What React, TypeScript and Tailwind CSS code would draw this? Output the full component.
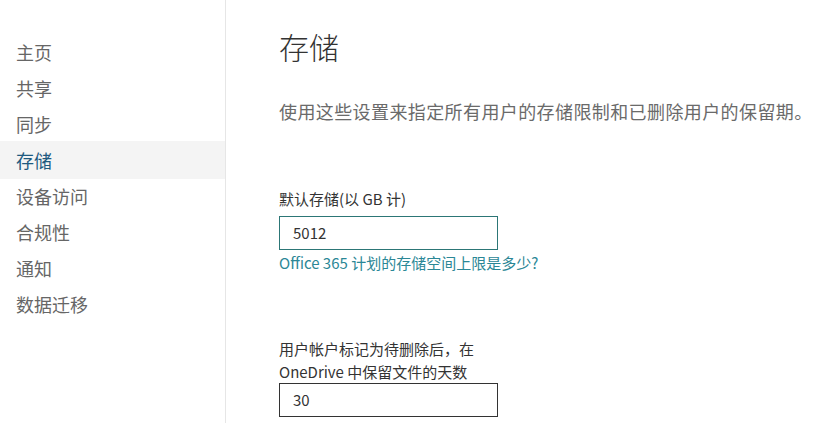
import React from 'react';

const font = { fontFamily: '"Noto Sans CJK SC", "Noto Sans", sans-serif' };

const navItems = ['主页', '共享', '同步', '存储', '设备访问', '合规性', '通知', '数据迁移'];

const Sidebar: React.FC = () => {
  return (
    <aside className="w-[226px] shrink-0 border-r border-[#e6e6e6] pt-[34px]">
      <ul>
        {navItems.map((item) => {
          const active = item === '存储';
          return (
            <li
              key={item}
              className={
                active
                  ? 'h-[38px] -my-[1px] flex items-center pl-[16px] text-[18px] text-[#1e5a80] bg-[#f4f4f4]'
                  : 'h-[36px] flex items-center pl-[16px] text-[18px] text-[#666666]'
              }
            >
              {item}
            </li>
          );
        })}
      </ul>
    </aside>
  );
};

const App: React.FC = () => {
  return (
    <div className="flex w-[836px] h-[423px] bg-white overflow-hidden" style={font}>
      <Sidebar />
      <main className="flex-1 pl-[53px] pt-[24px]">
        <h1 className="text-[30px] font-light text-[#333333] leading-[44px]">存储</h1>
        <p className="mt-[31px] text-[18px] tracking-[0.4px] text-[#6a6a6a] leading-[24px] whitespace-nowrap">
          使用这些设置来指定所有用户的存储限制和已删除用户的保留期。
        </p>

        <div className="mt-[66px]">
          <label className="block text-[15px] text-[#333333] leading-[20px]">默认存储(以 GB 计)</label>
          <div className="mt-[7px] w-[219px] h-[34px] border border-[#2c7676] flex items-center pl-[13px] text-[15px] text-[#333333]">
            5012
          </div>
          <a className="block mt-[3px] text-[15px] text-[#2b8796] leading-[20px]">
            Office 365 计划的存储空间上限是多少?
          </a>
        </div>

        <div className="mt-[64px]">
          <label className="block text-[15px] text-[#333333] leading-[23px]">
            用户帐户标记为待删除后，在
            <br />
            OneDrive 中保留文件的天数
          </label>
          <div className="mt-0 w-[219px] h-[34px] border border-[#333333] flex items-center pl-[13px] text-[15px] text-[#333333]">
            30
          </div>
        </div>
      </main>
    </div>
  );
};

export default App;
